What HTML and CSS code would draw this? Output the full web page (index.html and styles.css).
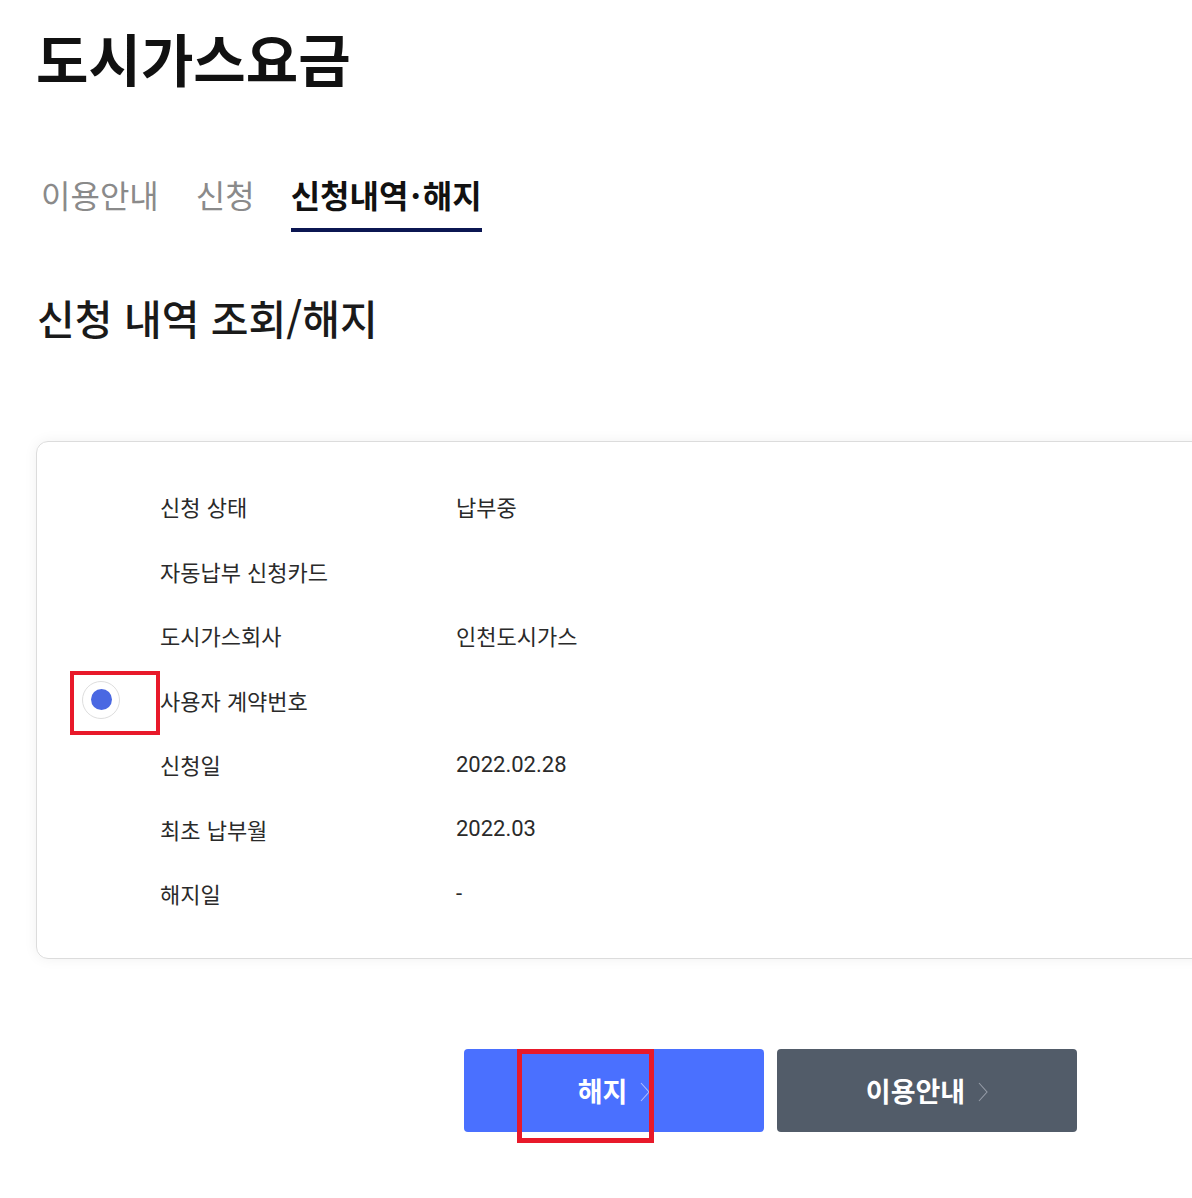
FILE: index.html
```html
<!DOCTYPE html>
<html lang="ko">
<head>
<meta charset="utf-8">
<title>도시가스요금</title>
<link rel="stylesheet" href="styles.css">
</head>
<body>
<main class="page">
  <h1 class="title">도시가스요금</h1>
  <nav class="tabs">
    <a class="tab">이용안내</a>
    <a class="tab">신청</a>
    <a class="tab active">신청내역<span class="mid">·</span>해지</a>
  </nav>
  <h2 class="subtitle">신청 내역 조회/해지</h2>
  <section class="card">
    <div class="row"><span class="sel"></span><span class="label">신청 상태</span><span class="value">납부중</span></div>
    <div class="row"><span class="sel"></span><span class="label">자동납부 신청카드</span><span class="value"></span></div>
    <div class="row"><span class="sel"></span><span class="label">도시가스회사</span><span class="value">인천도시가스</span></div>
    <div class="row"><span class="sel"><span class="radio"><span class="dot"></span></span><span class="mark mark-radio"></span></span><span class="label">사용자 계약번호</span><span class="value"></span></div>
    <div class="row"><span class="sel"></span><span class="label">신청일</span><span class="value">2022.02.28</span></div>
    <div class="row"><span class="sel"></span><span class="label">최초 납부월</span><span class="value">2022.03</span></div>
    <div class="row"><span class="sel"></span><span class="label">해지일</span><span class="value">-</span></div>
  </section>
  <div class="actions">
    <a class="btn btn-primary">해지<svg class="chev" viewBox="0 0 10 20" width="10" height="20"><polyline points="1,1 9,10 1,19" fill="none" stroke="#aebdff" stroke-width="1.1"/></svg><span class="mark mark-btn"></span></a>
    <a class="btn btn-dark">이용안내<svg class="chev" viewBox="0 0 10 20" width="10" height="20"><polyline points="1,1 9,10 1,19" fill="none" stroke="#959ca7" stroke-width="1.1"/></svg></a>
  </div>
</main>
</body>
</html>
```
FILE: styles.css
```css
html {
  overflow-x: hidden;
}
html, body {
  margin: 0;
  padding: 0;
  background: #fff;
}
body {
  font-family: "Noto Sans CJK KR", "Noto Sans", sans-serif;
  color: #222;
}
.page {
  padding: 19px 0 40px 36px;
}
.title {
  margin: 0;
  font-size: 57px;
  font-weight: 700;
  line-height: 76px;
  color: #111;
}
.tabs {
  display: flex;
  gap: 37px;
  margin-top: 77px;
  padding-left: 5px;
}
.tab {
  font-size: 32px;
  line-height: 44px;
  color: #8a8a8a;
  font-weight: 400;
  padding-bottom: 12px;
  border-bottom: 4px solid transparent;
}
.tab.active {
  color: #111;
  font-weight: 700;
  border-bottom-color: #0b1652;
  margin-left: -1px;
}
.mid {
  margin: 0 2px;
}
.subtitle {
  margin: 57px 0 0 1px;
  font-size: 41px;
  font-weight: 500;
  line-height: 56px;
  color: #1a1a1a;
}
.card {
  margin-top: 96px;
  width: 1200px;
  border: 1px solid #dcdcdc;
  border-radius: 12px;
  box-shadow: 0 0 14px rgba(0, 0, 0, 0.06);
  padding: 32px 0 32px 45px;
  box-sizing: content-box;
}
.row {
  display: grid;
  grid-template-columns: 78px 296px 1fr;
  height: 64.5px;
  align-items: center;
  font-size: 22px;
  color: #2a2a2a;
}
.value {
  font-family: "Roboto", "Noto Sans CJK KR", sans-serif;
}
.sel {
  position: relative;
  height: 100%;
  display: flex;
  align-items: center;
}
.radio {
  width: 36px;
  height: 36px;
  border: 1px solid #dedede;
  border-radius: 50%;
  display: flex;
  align-items: center;
  justify-content: center;
  background: #fff;
}
.dot {
  width: 21px;
  height: 21px;
  border-radius: 50%;
  background: #4a68e2;
}
.mark {
  position: absolute;
  border: 4px solid #e8192a;
  box-sizing: border-box;
  pointer-events: none;
}
.mark-radio {
  left: -12px;
  top: 3px;
  width: 90px;
  height: 64px;
}
.actions {
  display: flex;
  gap: 13px;
  margin-top: 90px;
  padding-left: 428px;
}
.btn {
  position: relative;
  width: 300px;
  height: 83px;
  border-radius: 4px;
  font-size: 27px;
  font-weight: 700;
  color: #fff;
  display: flex;
  align-items: center;
  justify-content: center;
  gap: 13px;
  cursor: pointer;
}
.btn-primary { background: #4a70ff; }
.btn-dark { background: #525c69; }
.chev { display: block; margin-top: 4px; }
.mark-btn {
  left: 53px;
  top: 0;
  width: 137px;
  height: 94px;
  border-width: 5px;
}
```
